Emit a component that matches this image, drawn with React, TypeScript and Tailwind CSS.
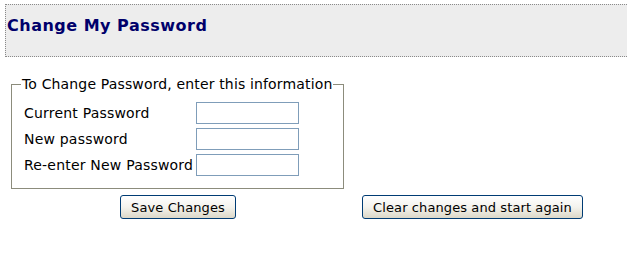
const font = { fontFamily: '"DejaVu Sans", Verdana, sans-serif' }

const fields = ["Current Password", "New password", "Re-enter New Password"]

function XpButton({ children }: { children: React.ReactNode }) {
  return (
    <button
      type="button"
      className="h-[24px] rounded-[3px] border border-[#003c74] bg-gradient-to-b from-white via-[#f4f3ee] to-[#dcd8c8] px-[10px] text-[13px] leading-none tracking-[0.1px] text-black"
    >
      {children}
    </button>
  )
}

export default function App() {
  return (
    <div className="min-h-screen bg-white pt-[4px] text-black" style={font}>
      <div className="ml-[5px] h-[53px] border border-r-0 border-dotted border-[#8a8a8a] bg-[#ededed] pl-[1px] pt-[11px]">
        <h2 className="text-[16px] font-bold leading-[20px] tracking-[0.5px] text-[#00006b]">
          Change My Password
        </h2>
      </div>

      <fieldset className="ml-[11px] mt-[19px] w-[333px] border border-[#8c8c7c] pb-[12px] pl-[12px] pt-[10px]">
        <legend className="-ml-[3px] px-[1px] text-[14px] leading-[16px] tracking-[0.15px]">
          To Change Password, enter this information
        </legend>
        <div className="grid grid-cols-[172px_103px] items-center gap-y-[4px] text-[14px] tracking-[0.2px]">
          {fields.map((label) => (
            <div key={label} className="contents">
              <label className="whitespace-nowrap leading-[16px]">{label}</label>
              <input
                type="password"
                className="h-[22px] w-[103px] border border-[#7f9db9] bg-white outline-none"
              />
            </div>
          ))}
        </div>
      </fieldset>

      <div className="mt-[6px] flex">
        <div className="ml-[10px] flex w-[336px] justify-center">
          <XpButton>Save Changes</XpButton>
        </div>
        <div className="flex w-[253px] justify-center">
          <XpButton>Clear changes and start again</XpButton>
        </div>
      </div>
    </div>
  )
}
